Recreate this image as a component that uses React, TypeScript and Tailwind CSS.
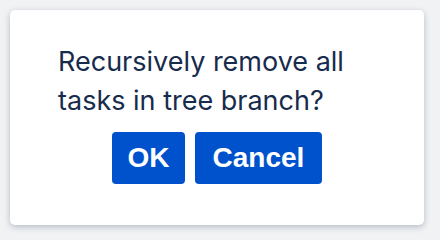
export default function App() {
  return (
    <div className="w-[440px] h-[240px] bg-[#f1f2f4] pt-[10px] pl-[10px]">
      <div className="w-[414px] h-[215px] bg-white rounded-[5px] shadow-[0_2px_6px_rgba(9,30,66,0.25)] flex flex-col">
        <p className="pl-[48px] pt-[33px] text-[27px] leading-[38.5px] text-[#172b4d] font-['Inter',sans-serif]">
          Recursively remove all
          <br />
          tasks in tree branch?
        </p>
        <div className="flex justify-center gap-[10px] mt-[12px]">
          <button className="w-[73px] h-[52px] rounded-[4px] bg-[#0052cc] text-white text-[28px] font-bold font-['Liberation_Sans',sans-serif]">
            OK
          </button>
          <button className="w-[127px] h-[52px] rounded-[4px] bg-[#0052cc] text-white text-[28px] font-bold font-['Liberation_Sans',sans-serif]">
            Cancel
          </button>
        </div>
      </div>
    </div>
  );
}
